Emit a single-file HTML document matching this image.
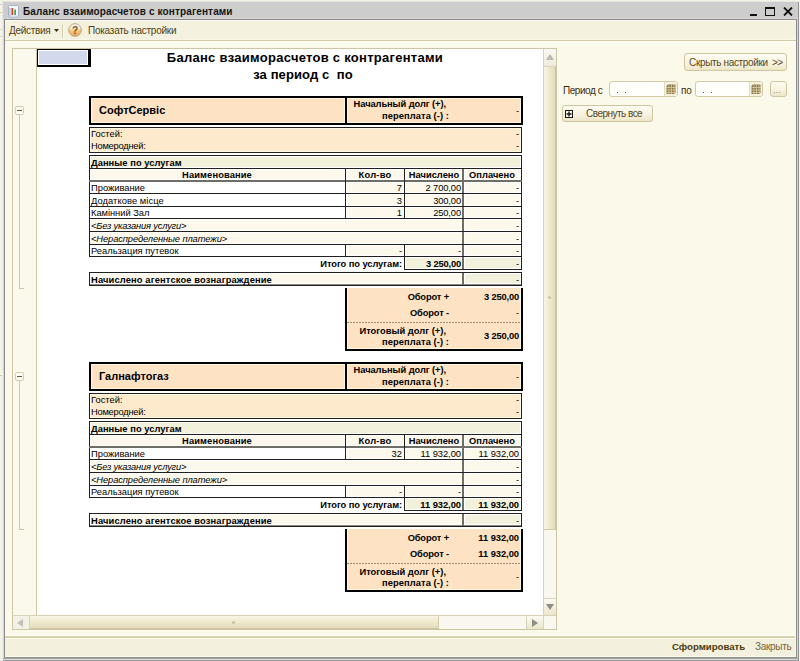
<!DOCTYPE html><html><head><meta charset="utf-8"><style>html,body{margin:0;padding:0;width:800px;height:661px;overflow:hidden}body{position:relative;font-family:"Liberation Sans",sans-serif}body>div,body>svg{position:absolute}</style></head><body><div style="left:0px;top:0px;width:800px;height:661px;background:#f6f3e2;"></div>
<div style="left:0px;top:4px;width:2px;height:1px;background:#d8ceb0;"></div>
<div style="left:0px;top:12px;width:2px;height:1px;background:#d8ceb0;"></div>
<div style="left:0px;top:29px;width:2px;height:1px;background:#e0d8c0;"></div>
<div style="left:0px;top:36px;width:2px;height:1px;background:#e0d8c0;"></div>
<div style="left:0px;top:375px;width:2px;height:1px;background:#d8ceb0;"></div>
<div style="left:2px;top:1px;width:797px;height:660px;background:#e6e6e6;"></div>
<div style="left:3px;top:2px;width:795px;height:659px;background:#cdcdcd;"></div>
<div style="left:5px;top:20px;width:791px;height:636px;background:#fbf9ea;"></div>
<div style="left:3px;top:18px;width:795px;height:1px;background:#d9d9d9;"></div>
<div style="left:4px;top:19px;width:793px;height:1px;background:#8a8a8a;"></div>
<div style="left:4px;top:19px;width:1px;height:639px;background:#8a8a8a;"></div>
<div style="left:796px;top:19px;width:1px;height:639px;background:#8a8a8a;"></div>
<div style="left:4px;top:657px;width:793px;height:1px;background:#8e8e8e;"></div>
<div style="left:3px;top:658px;width:795px;height:1px;background:#a6a6a6;"></div>
<div style="left:3px;top:659px;width:795px;height:1px;background:#d8d8d8;"></div>
<div style="left:2px;top:660px;width:797px;height:1px;background:#9c9c9c;"></div>
<div style="left:3px;top:20px;width:1px;height:638px;background:#d8d8dc;"></div>
<div style="left:2px;top:20px;width:1px;height:641px;background:#ececec;"></div>
<div style="left:797px;top:20px;width:1px;height:638px;background:#d4d4d4;"></div>
<div style="left:798px;top:2px;width:1px;height:659px;background:#929292;"></div>
<div style="left:5px;top:20px;width:791px;height:20px;background:#f4f2de;"></div>
<div style="left:5px;top:20px;width:791px;height:1px;background:#fdfcf2;"></div>
<div style="left:5px;top:39px;width:791px;height:1px;background:#f8f6e6;"></div>
<div style="left:5px;top:40px;width:791px;height:1px;background:#d3cba8;"></div>
<div style="left:5px;top:41px;width:791px;height:1px;background:#fdfcf0;"></div>
<svg style="left:8px;top:5px" width="12" height="13" viewBox="0 0 12 13"><rect x="0.5" y="0.5" width="10" height="11.5" rx="1" fill="#f6f8fc" stroke="#9fb2c8"/><path d="M2 3v8" stroke="#b0b0b0"/><rect x="3.5" y="3" width="1.6" height="7" fill="#e03020"/><rect x="6.3" y="4.5" width="1.6" height="5.5" fill="#30a040"/><rect x="1" y="10.5" width="9" height="1.2" fill="#c8daf0"/></svg>
<div style="top:6px;font-size:10px;font-weight:bold;color:#141414;line-height:normal;white-space:pre;letter-spacing:0.13px;left:23px;">Баланс взаиморасчетов с контрагентами</div>
<div style="left:750px;top:14px;width:7px;height:2px;background:#111;"></div>
<div style="left:765px;top:7px;width:10px;height:9px;box-sizing:border-box;border:1px solid #111;"></div>
<div style="left:765px;top:7px;width:10px;height:2px;background:#111;"></div>
<svg style="left:783px;top:7px" width="10" height="9" viewBox="0 0 10 9"><path d="M1 0.5L9 8.5M9 0.5L1 8.5" stroke="#111" stroke-width="1.8"/></svg>
<div style="top:25px;font-size:10px;font-weight:normal;color:#4e3e14;line-height:normal;white-space:pre;letter-spacing:-0.3px;left:9px;">Действия</div>
<svg style="left:54px;top:29px" width="5" height="3" viewBox="0 0 5 3"><path d="M0 0h5L2.5 3z" fill="#3b2e0c"/></svg>
<div style="left:62px;top:24px;width:1px;height:14px;background:#d2cbac;"></div>
<div style="left:63px;top:24px;width:1px;height:14px;background:#fbfaf2;"></div>
<svg style="left:68px;top:23px" width="14" height="14" viewBox="0 0 14 14"><defs><linearGradient id="hg" x1="0" y1="0" x2="0" y2="1"><stop offset="0" stop-color="#fffaf0"/><stop offset="0.4" stop-color="#fde6c0"/><stop offset="0.55" stop-color="#f9c47a"/><stop offset="1" stop-color="#f0a850"/></linearGradient></defs><circle cx="7" cy="7" r="6.3" fill="url(#hg)" stroke="#a49c88" stroke-width="0.9"/><text x="7" y="10.8" font-family="Liberation Sans" font-weight="bold" font-size="10" text-anchor="middle" fill="#6a5a30">?</text></svg>
<div style="top:25px;font-size:10px;font-weight:normal;color:#4e3e14;line-height:normal;white-space:pre;letter-spacing:-0.24px;left:88px;">Показать настройки</div>
<div style="left:5px;top:635px;width:791px;height:1px;background:#fffff6;"></div>
<div style="left:5px;top:636px;width:791px;height:1px;background:#d6cfae;"></div>
<div style="left:5px;top:637px;width:791px;height:1px;background:#d8d1b2;"></div>
<div style="left:5px;top:638px;width:791px;height:19px;background:#f3f1dd;"></div>
<div style="left:5px;top:638px;width:791px;height:1px;background:#fdfbe8;"></div>
<div style="left:5px;top:656px;width:791px;height:1px;background:#fdfce8;"></div>
<div style="left:795px;top:42px;width:1px;height:615px;background:#fdfce8;"></div>
<div style="top:641px;font-size:9.7px;font-weight:bold;color:#4e3c12;line-height:normal;white-space:pre;letter-spacing:-0.05px;left:672px;">Сформировать</div>
<div style="top:641px;font-size:10px;font-weight:normal;color:#76653a;line-height:normal;white-space:pre;letter-spacing:-0.3px;left:755px;">Закрыть</div>
<div style="left:12px;top:48px;width:545px;height:582px;background:#ffffff;box-sizing:border-box;border:1px solid #cdc6a4;"></div>
<div style="left:13px;top:49px;width:23px;height:566px;background:#fbf9ec;"></div>
<div style="left:36px;top:49px;width:1px;height:566px;background:#cdc6a4;"></div>
<div style="left:543px;top:49px;width:13px;height:566px;background:#f9f7ef;"></div>
<div style="left:543px;top:49px;width:1px;height:566px;background:#d8d2b8;"></div>
<div style="left:544px;top:49px;width:12px;height:17px;background:linear-gradient(180deg,#fbfaf2,#efeadb)"></div>
<div style="left:544px;top:66px;width:12px;height:1px;background:#d9d3ba;"></div>
<svg style="left:546px;top:54px" width="8" height="6" viewBox="0 0 8 6"><path d="M0 6h8L4 0z" fill="#b8b8b0"/></svg>
<div style="left:544px;top:67px;width:12px;height:463px;background:linear-gradient(90deg,#f9f6e4,#efe9cc 50%,#e4dcbc);box-sizing:border-box;border-right:1px solid #cdc5a2;border-bottom:1px solid #d2caa8"></div>
<div style="left:548px;top:296px;width:3px;height:3px;background:#c8c2a8;border-radius:2px"></div>
<div style="left:544px;top:599px;width:12px;height:16px;background:linear-gradient(180deg,#fbfaf2,#ebe5ca)"></div>
<div style="left:544px;top:598px;width:12px;height:1px;background:#d9d3ba;"></div>
<svg style="left:546px;top:604px" width="8" height="6" viewBox="0 0 8 6"><path d="M0 0h8L4 6z" fill="#8c8c88"/></svg>
<div style="left:13px;top:615px;width:543px;height:14px;background:#f9f7ef;"></div>
<div style="left:13px;top:615px;width:543px;height:1px;background:#d8d2b8;"></div>
<div style="left:13px;top:616px;width:16px;height:13px;background:#f3f1e6;"></div>
<div style="left:29px;top:616px;width:1px;height:13px;background:#d9d3ba;"></div>
<svg style="left:17px;top:619px" width="6" height="8" viewBox="0 0 6 8"><path d="M6 0v8L0 4z" fill="#c0c0b8"/></svg>
<div style="left:30px;top:616px;width:409px;height:13px;background:linear-gradient(180deg,#f9f6e4,#efe9cc 50%,#e4dcbc);box-sizing:border-box;border-bottom:1px solid #cdc5a2;border-right:1px solid #d2caa8"></div>
<div style="left:232px;top:621px;width:3px;height:3px;background:#c8c2a8;border-radius:2px"></div>
<div style="left:527px;top:616px;width:16px;height:13px;background:linear-gradient(180deg,#fbfaf2,#ebe5ca)"></div>
<div style="left:526px;top:616px;width:1px;height:13px;background:#d9d3ba;"></div>
<svg style="left:532px;top:619px" width="6" height="8" viewBox="0 0 6 8"><path d="M0 0v8L6 4z" fill="#8c8c88"/></svg>
<div style="left:543px;top:615px;width:1px;height:14px;background:#d9d3ba;"></div>
<div style="left:15px;top:106px;width:9px;height:9px;background:#fdfcf4;box-sizing:border-box;border:1px solid #d4cdb0;border-radius:2px"></div>
<div style="left:17px;top:110px;width:5px;height:1px;background:#6a5a2a;"></div>
<div style="left:19px;top:115px;width:1px;height:173px;background:#cfc8a8;"></div>
<div style="left:19px;top:288px;width:5px;height:1px;background:#cfc8a8;"></div>
<div style="left:15px;top:372px;width:9px;height:9px;background:#fdfcf4;box-sizing:border-box;border:1px solid #d4cdb0;border-radius:2px"></div>
<div style="left:17px;top:376px;width:5px;height:1px;background:#6a5a2a;"></div>
<div style="left:19px;top:381px;width:1px;height:148px;background:#cfc8a8;"></div>
<div style="left:19px;top:529px;width:5px;height:1px;background:#cfc8a8;"></div>
<div style="left:37px;top:49px;width:54px;height:18px;background:#000;"></div>
<div style="left:38px;top:50px;width:50px;height:15px;background:#fff;"></div>
<div style="left:39px;top:51px;width:48px;height:13px;background:#d3d9ed;"></div>
<div style="top:50px;font-size:13px;font-weight:bold;color:#000;line-height:normal;white-space:pre;letter-spacing:0.27px;left:5px;width:600px;text-align:center;">Баланс взаиморасчетов с контрагентами</div>
<div style="top:67px;font-size:13px;font-weight:bold;color:#000;line-height:normal;white-space:pre;letter-spacing:0.1px;left:3px;width:600px;text-align:center;">за период с  по</div>
<div style="left:89px;top:96px;width:434px;height:29px;background:#000;"></div>
<div style="left:91px;top:98px;width:254px;height:25px;background:#fff8dc;"></div>
<div style="left:92px;top:99px;width:252px;height:23px;background:#fde3c4;"></div>
<div style="left:347px;top:98px;width:174px;height:25px;background:#fff8dc;"></div>
<div style="left:348px;top:99px;width:172px;height:23px;background:#fde3c4;"></div>
<div style="top:104px;font-size:11px;font-weight:bold;color:#000;line-height:normal;white-space:pre;left:99px;">СофтСервіс</div>
<div style="top:99px;font-size:9.33px;font-weight:bold;color:#000;line-height:normal;white-space:pre;letter-spacing:-0.08px;left:46px;width:400px;text-align:right;">Начальный долг (+),</div>
<div style="top:111px;font-size:9.33px;font-weight:bold;color:#000;line-height:normal;white-space:pre;letter-spacing:0.08px;left:49px;width:400px;text-align:right;">переплата (-) :</div>
<div style="top:106px;font-size:9.33px;font-weight:normal;color:#000;line-height:normal;white-space:pre;left:119px;width:400px;text-align:right;">-</div>
<div style="left:89px;top:127px;width:433px;height:26px;background:#202020;"></div>
<div style="left:90px;top:128px;width:431px;height:24px;background:#fffbe2;"></div>
<div style="left:91px;top:129px;width:429px;height:22px;background:#fdeacc;"></div>
<div style="top:129px;font-size:9.33px;font-weight:normal;color:#000;line-height:normal;white-space:pre;letter-spacing:0.02px;left:91px;">Гостей:</div>
<div style="top:141px;font-size:9.33px;font-weight:normal;color:#000;line-height:normal;white-space:pre;letter-spacing:-0.24px;left:91px;">Номеродней:</div>
<div style="top:129px;font-size:9.33px;font-weight:normal;color:#000;line-height:normal;white-space:pre;left:119px;width:400px;text-align:right;">-</div>
<div style="top:141px;font-size:9.33px;font-weight:normal;color:#000;line-height:normal;white-space:pre;left:119px;width:400px;text-align:right;">-</div>
<div style="left:89px;top:155px;width:433px;height:27px;background:#202020;"></div>
<div style="left:90px;top:156px;width:431px;height:12px;background:#ffffff;"></div>
<div style="left:91px;top:157px;width:429px;height:10px;background:#f2f1dc;"></div>
<div style="top:158px;font-size:9.33px;font-weight:bold;color:#000;line-height:normal;white-space:pre;letter-spacing:0.05px;left:91px;">Данные по услугам</div>
<div style="left:90px;top:169px;width:255px;height:11px;background:#ffffff;"></div>
<div style="left:91px;top:170px;width:253px;height:9px;background:#fdf8ec;"></div>
<div style="left:346px;top:169px;width:58px;height:11px;background:#ffffff;"></div>
<div style="left:347px;top:170px;width:56px;height:9px;background:#fdf8ec;"></div>
<div style="left:405px;top:169px;width:57px;height:11px;background:#ffffff;"></div>
<div style="left:406px;top:170px;width:55px;height:9px;background:#fdf8ec;"></div>
<div style="left:464px;top:169px;width:57px;height:11px;background:#ffffff;"></div>
<div style="left:465px;top:170px;width:55px;height:9px;background:#fdf8ec;"></div>
<div style="left:462px;top:169px;width:2px;height:11px;background:#6e6e66;"></div>
<div style="left:89px;top:180px;width:433px;height:2px;background:#6e6e66;"></div>
<div style="left:345px;top:180px;width:1px;height:2px;background:#202020;"></div>
<div style="left:404px;top:180px;width:1px;height:2px;background:#202020;"></div>
<div style="top:170px;font-size:9.33px;font-weight:bold;color:#000;line-height:normal;white-space:pre;letter-spacing:0.11px;left:-83px;width:600px;text-align:center;">Наименование</div>
<div style="top:170px;font-size:9.33px;font-weight:bold;color:#000;line-height:normal;white-space:pre;letter-spacing:0.25px;left:75px;width:600px;text-align:center;">Кол-во</div>
<div style="top:170px;font-size:9.33px;font-weight:bold;color:#000;line-height:normal;white-space:pre;left:134px;width:600px;text-align:center;">Начислено</div>
<div style="top:170px;font-size:9.33px;font-weight:bold;color:#000;line-height:normal;white-space:pre;letter-spacing:0.02px;left:192px;width:600px;text-align:center;">Оплачено</div>
<div style="left:89px;top:182px;width:433px;height:12px;background:#202020;"></div>
<div style="left:90px;top:182px;width:255px;height:11px;background:#ffffff;"></div>
<div style="left:91px;top:183px;width:253px;height:9px;background:#ffffff;"></div>
<div style="left:346px;top:182px;width:58px;height:11px;background:#ffffff;"></div>
<div style="left:347px;top:183px;width:56px;height:9px;background:#fdf8ec;"></div>
<div style="left:405px;top:182px;width:57px;height:11px;background:#ffffff;"></div>
<div style="left:406px;top:183px;width:55px;height:9px;background:#fdf8ec;"></div>
<div style="left:464px;top:182px;width:57px;height:11px;background:#ffffff;"></div>
<div style="left:465px;top:183px;width:55px;height:9px;background:#fdf8ec;"></div>
<div style="left:462px;top:182px;width:2px;height:11px;background:#6e6e66;"></div>
<div style="top:183px;font-size:9.33px;font-weight:normal;color:#000;line-height:normal;white-space:pre;left:91px;">Проживание</div>
<div style="top:183px;font-size:9.33px;font-weight:normal;color:#000;line-height:normal;white-space:pre;left:2px;width:400px;text-align:right;">7</div>
<div style="top:183px;font-size:9.33px;font-weight:normal;color:#000;line-height:normal;white-space:pre;letter-spacing:-0.11px;left:61px;width:400px;text-align:right;">2 700,00</div>
<div style="top:183px;font-size:9.33px;font-weight:normal;color:#000;line-height:normal;white-space:pre;left:119px;width:400px;text-align:right;">-</div>
<div style="left:89px;top:194px;width:433px;height:13px;background:#202020;"></div>
<div style="left:90px;top:194px;width:255px;height:12px;background:#ffffff;"></div>
<div style="left:91px;top:195px;width:253px;height:10px;background:#ffffff;"></div>
<div style="left:346px;top:194px;width:58px;height:12px;background:#ffffff;"></div>
<div style="left:347px;top:195px;width:56px;height:10px;background:#fdf8ec;"></div>
<div style="left:405px;top:194px;width:57px;height:12px;background:#ffffff;"></div>
<div style="left:406px;top:195px;width:55px;height:10px;background:#fdf8ec;"></div>
<div style="left:464px;top:194px;width:57px;height:12px;background:#ffffff;"></div>
<div style="left:465px;top:195px;width:55px;height:10px;background:#fdf8ec;"></div>
<div style="left:462px;top:194px;width:2px;height:12px;background:#6e6e66;"></div>
<div style="top:196px;font-size:9.33px;font-weight:normal;color:#000;line-height:normal;white-space:pre;letter-spacing:0.07px;left:91px;">Додаткове місце</div>
<div style="top:196px;font-size:9.33px;font-weight:normal;color:#000;line-height:normal;white-space:pre;left:2px;width:400px;text-align:right;">3</div>
<div style="top:196px;font-size:9.33px;font-weight:normal;color:#000;line-height:normal;white-space:pre;letter-spacing:-0.11px;left:61px;width:400px;text-align:right;">300,00</div>
<div style="top:196px;font-size:9.33px;font-weight:normal;color:#000;line-height:normal;white-space:pre;left:119px;width:400px;text-align:right;">-</div>
<div style="left:89px;top:207px;width:433px;height:12px;background:#202020;"></div>
<div style="left:90px;top:207px;width:255px;height:11px;background:#ffffff;"></div>
<div style="left:91px;top:208px;width:253px;height:9px;background:#ffffff;"></div>
<div style="left:346px;top:207px;width:58px;height:11px;background:#ffffff;"></div>
<div style="left:347px;top:208px;width:56px;height:9px;background:#fdf8ec;"></div>
<div style="left:405px;top:207px;width:57px;height:11px;background:#ffffff;"></div>
<div style="left:406px;top:208px;width:55px;height:9px;background:#fdf8ec;"></div>
<div style="left:464px;top:207px;width:57px;height:11px;background:#ffffff;"></div>
<div style="left:465px;top:208px;width:55px;height:9px;background:#fdf8ec;"></div>
<div style="left:462px;top:207px;width:2px;height:11px;background:#6e6e66;"></div>
<div style="top:208px;font-size:9.33px;font-weight:normal;color:#000;line-height:normal;white-space:pre;letter-spacing:-0.03px;left:91px;">Камінний Зал</div>
<div style="top:208px;font-size:9.33px;font-weight:normal;color:#000;line-height:normal;white-space:pre;left:2px;width:400px;text-align:right;">1</div>
<div style="top:208px;font-size:9.33px;font-weight:normal;color:#000;line-height:normal;white-space:pre;letter-spacing:-0.11px;left:61px;width:400px;text-align:right;">250,00</div>
<div style="top:208px;font-size:9.33px;font-weight:normal;color:#000;line-height:normal;white-space:pre;left:119px;width:400px;text-align:right;">-</div>
<div style="left:89px;top:219px;width:433px;height:13px;background:#202020;"></div>
<div style="left:90px;top:219px;width:372px;height:12px;background:#ffffff;"></div>
<div style="left:91px;top:220px;width:370px;height:10px;background:#fdf8ec;"></div>
<div style="left:464px;top:219px;width:57px;height:12px;background:#ffffff;"></div>
<div style="left:465px;top:220px;width:55px;height:10px;background:#fdf8ec;"></div>
<div style="left:462px;top:219px;width:2px;height:12px;background:#6e6e66;"></div>
<div style="top:221px;font-size:9.33px;font-weight:normal;color:#000;line-height:normal;white-space:pre;font-style:italic;letter-spacing:-0.19px;left:91px;">&lt;Без указания услуги&gt;</div>
<div style="top:221px;font-size:9.33px;font-weight:normal;color:#000;line-height:normal;white-space:pre;left:119px;width:400px;text-align:right;">-</div>
<div style="left:89px;top:232px;width:433px;height:13px;background:#202020;"></div>
<div style="left:90px;top:232px;width:372px;height:12px;background:#ffffff;"></div>
<div style="left:91px;top:233px;width:370px;height:10px;background:#fdf8ec;"></div>
<div style="left:464px;top:232px;width:57px;height:12px;background:#ffffff;"></div>
<div style="left:465px;top:233px;width:55px;height:10px;background:#fdf8ec;"></div>
<div style="left:462px;top:232px;width:2px;height:12px;background:#6e6e66;"></div>
<div style="top:234px;font-size:9.33px;font-weight:normal;color:#000;line-height:normal;white-space:pre;font-style:italic;letter-spacing:-0.1px;left:91px;">&lt;Нераспределенные платежи&gt;</div>
<div style="top:234px;font-size:9.33px;font-weight:normal;color:#000;line-height:normal;white-space:pre;left:119px;width:400px;text-align:right;">-</div>
<div style="left:89px;top:245px;width:433px;height:12px;background:#202020;"></div>
<div style="left:90px;top:245px;width:255px;height:11px;background:#ffffff;"></div>
<div style="left:91px;top:246px;width:253px;height:9px;background:#ffffff;"></div>
<div style="left:346px;top:245px;width:58px;height:11px;background:#ffffff;"></div>
<div style="left:347px;top:246px;width:56px;height:9px;background:#fdf8ec;"></div>
<div style="left:405px;top:245px;width:57px;height:11px;background:#ffffff;"></div>
<div style="left:406px;top:246px;width:55px;height:9px;background:#fdf8ec;"></div>
<div style="left:464px;top:245px;width:57px;height:11px;background:#ffffff;"></div>
<div style="left:465px;top:246px;width:55px;height:9px;background:#fdf8ec;"></div>
<div style="left:462px;top:245px;width:2px;height:11px;background:#6e6e66;"></div>
<div style="top:246px;font-size:9.33px;font-weight:normal;color:#000;line-height:normal;white-space:pre;letter-spacing:0.01px;left:91px;">Реальзация путевок</div>
<div style="top:246px;font-size:9.33px;font-weight:normal;color:#000;line-height:normal;white-space:pre;left:2px;width:400px;text-align:right;">-</div>
<div style="top:246px;font-size:9.33px;font-weight:normal;color:#000;line-height:normal;white-space:pre;left:61px;width:400px;text-align:right;">-</div>
<div style="top:246px;font-size:9.33px;font-weight:normal;color:#000;line-height:normal;white-space:pre;left:119px;width:400px;text-align:right;">-</div>
<div style="left:404px;top:256px;width:118px;height:14px;background:#202020;"></div>
<div style="left:405px;top:257px;width:57px;height:12px;background:#ffffff;"></div>
<div style="left:406px;top:258px;width:55px;height:10px;background:#f2f1dc;"></div>
<div style="left:464px;top:257px;width:57px;height:12px;background:#ffffff;"></div>
<div style="left:465px;top:258px;width:55px;height:10px;background:#f2f1dc;"></div>
<div style="left:462px;top:257px;width:2px;height:12px;background:#6e6e66;"></div>
<div style="top:259px;font-size:9.33px;font-weight:bold;color:#000;line-height:normal;white-space:pre;letter-spacing:-0.08px;left:2px;width:400px;text-align:right;">Итого по услугам:</div>
<div style="top:259px;font-size:9.33px;font-weight:bold;color:#000;line-height:normal;white-space:pre;letter-spacing:-0.16px;left:61px;width:400px;text-align:right;">3 250,00</div>
<div style="top:259px;font-size:9.33px;font-weight:normal;color:#000;line-height:normal;white-space:pre;left:119px;width:400px;text-align:right;">-</div>
<div style="left:89px;top:272px;width:433px;height:14px;background:#202020;"></div>
<div style="left:90px;top:273px;width:372px;height:11px;background:#ffffff;"></div>
<div style="left:91px;top:274px;width:370px;height:9px;background:#fdf8ec;"></div>
<div style="left:464px;top:273px;width:57px;height:11px;background:#ffffff;"></div>
<div style="left:465px;top:274px;width:55px;height:9px;background:#f2f1dc;"></div>
<div style="left:90px;top:284px;width:431px;height:1px;background:#8c8a80;"></div>
<div style="left:462px;top:273px;width:2px;height:12px;background:#6e6e66;"></div>
<div style="top:275px;font-size:9.33px;font-weight:bold;color:#000;line-height:normal;white-space:pre;letter-spacing:0.14px;left:91px;">Начислено агентское вознаграждение</div>
<div style="top:275px;font-size:9.33px;font-weight:normal;color:#000;line-height:normal;white-space:pre;left:119px;width:400px;text-align:right;">-</div>
<div style="left:345px;top:288px;width:178px;height:63px;background:#000;"></div>
<div style="left:347px;top:288px;width:174px;height:61px;background:#fff8dc;"></div>
<div style="left:348px;top:289px;width:172px;height:59px;background:#fde3c4;"></div>
<div style="left:348px;top:288px;width:172px;height:1px;background:#fde3c4;"></div>
<div style="left:347px;top:322px;width:174px;height:1px;background:repeating-linear-gradient(90deg,#9c8c74 0 2px,transparent 2px 3px)"></div>
<div style="top:292px;font-size:9.33px;font-weight:bold;color:#000;line-height:normal;white-space:pre;letter-spacing:-0.14px;left:49px;width:400px;text-align:right;">Оборот +</div>
<div style="top:292px;font-size:9.33px;font-weight:bold;color:#000;line-height:normal;white-space:pre;letter-spacing:-0.16px;left:119px;width:400px;text-align:right;">3 250,00</div>
<div style="top:308px;font-size:9.33px;font-weight:bold;color:#000;line-height:normal;white-space:pre;letter-spacing:-0.14px;left:49px;width:400px;text-align:right;">Оборот -</div>
<div style="top:308px;font-size:9.33px;font-weight:normal;color:#000;line-height:normal;white-space:pre;left:119px;width:400px;text-align:right;">-</div>
<div style="top:326px;font-size:9.33px;font-weight:bold;color:#000;line-height:normal;white-space:pre;letter-spacing:0.01px;left:46px;width:400px;text-align:right;">Итоговый долг (+),</div>
<div style="top:337px;font-size:9.33px;font-weight:bold;color:#000;line-height:normal;white-space:pre;letter-spacing:0.08px;left:49px;width:400px;text-align:right;">переплата (-) :</div>
<div style="top:331px;font-size:9.33px;font-weight:bold;color:#000;line-height:normal;white-space:pre;letter-spacing:-0.16px;left:119px;width:400px;text-align:right;">3 250,00</div>
<div style="left:89px;top:362px;width:434px;height:29px;background:#000;"></div>
<div style="left:91px;top:364px;width:254px;height:25px;background:#fff8dc;"></div>
<div style="left:92px;top:365px;width:252px;height:23px;background:#fde3c4;"></div>
<div style="left:347px;top:364px;width:174px;height:25px;background:#fff8dc;"></div>
<div style="left:348px;top:365px;width:172px;height:23px;background:#fde3c4;"></div>
<div style="top:370px;font-size:11px;font-weight:bold;color:#000;line-height:normal;white-space:pre;left:99px;">Галнафтогаз</div>
<div style="top:365px;font-size:9.33px;font-weight:bold;color:#000;line-height:normal;white-space:pre;letter-spacing:-0.08px;left:46px;width:400px;text-align:right;">Начальный долг (+),</div>
<div style="top:377px;font-size:9.33px;font-weight:bold;color:#000;line-height:normal;white-space:pre;letter-spacing:0.08px;left:49px;width:400px;text-align:right;">переплата (-) :</div>
<div style="top:372px;font-size:9.33px;font-weight:normal;color:#000;line-height:normal;white-space:pre;left:119px;width:400px;text-align:right;">-</div>
<div style="left:89px;top:393px;width:433px;height:26px;background:#202020;"></div>
<div style="left:90px;top:394px;width:431px;height:24px;background:#fffbe2;"></div>
<div style="left:91px;top:395px;width:429px;height:22px;background:#fdeacc;"></div>
<div style="top:395px;font-size:9.33px;font-weight:normal;color:#000;line-height:normal;white-space:pre;letter-spacing:0.02px;left:91px;">Гостей:</div>
<div style="top:407px;font-size:9.33px;font-weight:normal;color:#000;line-height:normal;white-space:pre;letter-spacing:-0.24px;left:91px;">Номеродней:</div>
<div style="top:395px;font-size:9.33px;font-weight:normal;color:#000;line-height:normal;white-space:pre;left:119px;width:400px;text-align:right;">-</div>
<div style="top:407px;font-size:9.33px;font-weight:normal;color:#000;line-height:normal;white-space:pre;left:119px;width:400px;text-align:right;">-</div>
<div style="left:89px;top:421px;width:433px;height:27px;background:#202020;"></div>
<div style="left:90px;top:422px;width:431px;height:12px;background:#ffffff;"></div>
<div style="left:91px;top:423px;width:429px;height:10px;background:#f2f1dc;"></div>
<div style="top:424px;font-size:9.33px;font-weight:bold;color:#000;line-height:normal;white-space:pre;letter-spacing:0.05px;left:91px;">Данные по услугам</div>
<div style="left:90px;top:435px;width:255px;height:11px;background:#ffffff;"></div>
<div style="left:91px;top:436px;width:253px;height:9px;background:#fdf8ec;"></div>
<div style="left:346px;top:435px;width:58px;height:11px;background:#ffffff;"></div>
<div style="left:347px;top:436px;width:56px;height:9px;background:#fdf8ec;"></div>
<div style="left:405px;top:435px;width:57px;height:11px;background:#ffffff;"></div>
<div style="left:406px;top:436px;width:55px;height:9px;background:#fdf8ec;"></div>
<div style="left:464px;top:435px;width:57px;height:11px;background:#ffffff;"></div>
<div style="left:465px;top:436px;width:55px;height:9px;background:#fdf8ec;"></div>
<div style="left:462px;top:435px;width:2px;height:11px;background:#6e6e66;"></div>
<div style="left:89px;top:446px;width:433px;height:2px;background:#6e6e66;"></div>
<div style="left:345px;top:446px;width:1px;height:2px;background:#202020;"></div>
<div style="left:404px;top:446px;width:1px;height:2px;background:#202020;"></div>
<div style="top:436px;font-size:9.33px;font-weight:bold;color:#000;line-height:normal;white-space:pre;letter-spacing:0.11px;left:-83px;width:600px;text-align:center;">Наименование</div>
<div style="top:436px;font-size:9.33px;font-weight:bold;color:#000;line-height:normal;white-space:pre;letter-spacing:0.25px;left:75px;width:600px;text-align:center;">Кол-во</div>
<div style="top:436px;font-size:9.33px;font-weight:bold;color:#000;line-height:normal;white-space:pre;left:134px;width:600px;text-align:center;">Начислено</div>
<div style="top:436px;font-size:9.33px;font-weight:bold;color:#000;line-height:normal;white-space:pre;letter-spacing:0.02px;left:192px;width:600px;text-align:center;">Оплачено</div>
<div style="left:89px;top:448px;width:433px;height:12px;background:#202020;"></div>
<div style="left:90px;top:448px;width:255px;height:11px;background:#ffffff;"></div>
<div style="left:91px;top:449px;width:253px;height:9px;background:#ffffff;"></div>
<div style="left:346px;top:448px;width:58px;height:11px;background:#ffffff;"></div>
<div style="left:347px;top:449px;width:56px;height:9px;background:#fdf8ec;"></div>
<div style="left:405px;top:448px;width:57px;height:11px;background:#ffffff;"></div>
<div style="left:406px;top:449px;width:55px;height:9px;background:#fdf8ec;"></div>
<div style="left:464px;top:448px;width:57px;height:11px;background:#ffffff;"></div>
<div style="left:465px;top:449px;width:55px;height:9px;background:#fdf8ec;"></div>
<div style="left:462px;top:448px;width:2px;height:11px;background:#6e6e66;"></div>
<div style="top:449px;font-size:9.33px;font-weight:normal;color:#000;line-height:normal;white-space:pre;left:91px;">Проживание</div>
<div style="top:449px;font-size:9.33px;font-weight:normal;color:#000;line-height:normal;white-space:pre;left:2px;width:400px;text-align:right;">32</div>
<div style="top:449px;font-size:9.33px;font-weight:normal;color:#000;line-height:normal;white-space:pre;letter-spacing:-0.03px;left:61px;width:400px;text-align:right;">11 932,00</div>
<div style="top:449px;font-size:9.33px;font-weight:normal;color:#000;line-height:normal;white-space:pre;letter-spacing:-0.03px;left:119px;width:400px;text-align:right;">11 932,00</div>
<div style="left:89px;top:460px;width:433px;height:13px;background:#202020;"></div>
<div style="left:90px;top:460px;width:372px;height:12px;background:#ffffff;"></div>
<div style="left:91px;top:461px;width:370px;height:10px;background:#fdf8ec;"></div>
<div style="left:464px;top:460px;width:57px;height:12px;background:#ffffff;"></div>
<div style="left:465px;top:461px;width:55px;height:10px;background:#fdf8ec;"></div>
<div style="left:462px;top:460px;width:2px;height:12px;background:#6e6e66;"></div>
<div style="top:462px;font-size:9.33px;font-weight:normal;color:#000;line-height:normal;white-space:pre;font-style:italic;letter-spacing:-0.19px;left:91px;">&lt;Без указания услуги&gt;</div>
<div style="top:462px;font-size:9.33px;font-weight:normal;color:#000;line-height:normal;white-space:pre;left:119px;width:400px;text-align:right;">-</div>
<div style="left:89px;top:473px;width:433px;height:13px;background:#202020;"></div>
<div style="left:90px;top:473px;width:372px;height:12px;background:#ffffff;"></div>
<div style="left:91px;top:474px;width:370px;height:10px;background:#fdf8ec;"></div>
<div style="left:464px;top:473px;width:57px;height:12px;background:#ffffff;"></div>
<div style="left:465px;top:474px;width:55px;height:10px;background:#fdf8ec;"></div>
<div style="left:462px;top:473px;width:2px;height:12px;background:#6e6e66;"></div>
<div style="top:475px;font-size:9.33px;font-weight:normal;color:#000;line-height:normal;white-space:pre;font-style:italic;letter-spacing:-0.1px;left:91px;">&lt;Нераспределенные платежи&gt;</div>
<div style="top:475px;font-size:9.33px;font-weight:normal;color:#000;line-height:normal;white-space:pre;left:119px;width:400px;text-align:right;">-</div>
<div style="left:89px;top:486px;width:433px;height:12px;background:#202020;"></div>
<div style="left:90px;top:486px;width:255px;height:11px;background:#ffffff;"></div>
<div style="left:91px;top:487px;width:253px;height:9px;background:#ffffff;"></div>
<div style="left:346px;top:486px;width:58px;height:11px;background:#ffffff;"></div>
<div style="left:347px;top:487px;width:56px;height:9px;background:#fdf8ec;"></div>
<div style="left:405px;top:486px;width:57px;height:11px;background:#ffffff;"></div>
<div style="left:406px;top:487px;width:55px;height:9px;background:#fdf8ec;"></div>
<div style="left:464px;top:486px;width:57px;height:11px;background:#ffffff;"></div>
<div style="left:465px;top:487px;width:55px;height:9px;background:#fdf8ec;"></div>
<div style="left:462px;top:486px;width:2px;height:11px;background:#6e6e66;"></div>
<div style="top:487px;font-size:9.33px;font-weight:normal;color:#000;line-height:normal;white-space:pre;letter-spacing:0.01px;left:91px;">Реальзация путевок</div>
<div style="top:487px;font-size:9.33px;font-weight:normal;color:#000;line-height:normal;white-space:pre;left:2px;width:400px;text-align:right;">-</div>
<div style="top:487px;font-size:9.33px;font-weight:normal;color:#000;line-height:normal;white-space:pre;left:61px;width:400px;text-align:right;">-</div>
<div style="top:487px;font-size:9.33px;font-weight:normal;color:#000;line-height:normal;white-space:pre;left:119px;width:400px;text-align:right;">-</div>
<div style="left:404px;top:497px;width:118px;height:14px;background:#202020;"></div>
<div style="left:405px;top:498px;width:57px;height:12px;background:#ffffff;"></div>
<div style="left:406px;top:499px;width:55px;height:10px;background:#f2f1dc;"></div>
<div style="left:464px;top:498px;width:57px;height:12px;background:#ffffff;"></div>
<div style="left:465px;top:499px;width:55px;height:10px;background:#f2f1dc;"></div>
<div style="left:462px;top:498px;width:2px;height:12px;background:#6e6e66;"></div>
<div style="top:500px;font-size:9.33px;font-weight:bold;color:#000;line-height:normal;white-space:pre;letter-spacing:-0.08px;left:2px;width:400px;text-align:right;">Итого по услугам:</div>
<div style="top:500px;font-size:9.33px;font-weight:bold;color:#000;line-height:normal;white-space:pre;letter-spacing:-0.03px;left:61px;width:400px;text-align:right;">11 932,00</div>
<div style="top:500px;font-size:9.33px;font-weight:bold;color:#000;line-height:normal;white-space:pre;letter-spacing:-0.03px;left:119px;width:400px;text-align:right;">11 932,00</div>
<div style="left:89px;top:513px;width:433px;height:14px;background:#202020;"></div>
<div style="left:90px;top:514px;width:372px;height:11px;background:#ffffff;"></div>
<div style="left:91px;top:515px;width:370px;height:9px;background:#fdf8ec;"></div>
<div style="left:464px;top:514px;width:57px;height:11px;background:#ffffff;"></div>
<div style="left:465px;top:515px;width:55px;height:9px;background:#f2f1dc;"></div>
<div style="left:90px;top:525px;width:431px;height:1px;background:#8c8a80;"></div>
<div style="left:462px;top:514px;width:2px;height:12px;background:#6e6e66;"></div>
<div style="top:516px;font-size:9.33px;font-weight:bold;color:#000;line-height:normal;white-space:pre;letter-spacing:0.14px;left:91px;">Начислено агентское вознаграждение</div>
<div style="top:516px;font-size:9.33px;font-weight:normal;color:#000;line-height:normal;white-space:pre;left:119px;width:400px;text-align:right;">-</div>
<div style="left:345px;top:529px;width:178px;height:63px;background:#000;"></div>
<div style="left:347px;top:529px;width:174px;height:61px;background:#fff8dc;"></div>
<div style="left:348px;top:530px;width:172px;height:59px;background:#fde3c4;"></div>
<div style="left:348px;top:529px;width:172px;height:1px;background:#fde3c4;"></div>
<div style="left:347px;top:563px;width:174px;height:1px;background:repeating-linear-gradient(90deg,#9c8c74 0 2px,transparent 2px 3px)"></div>
<div style="top:533px;font-size:9.33px;font-weight:bold;color:#000;line-height:normal;white-space:pre;letter-spacing:-0.14px;left:49px;width:400px;text-align:right;">Оборот +</div>
<div style="top:533px;font-size:9.33px;font-weight:bold;color:#000;line-height:normal;white-space:pre;letter-spacing:-0.03px;left:119px;width:400px;text-align:right;">11 932,00</div>
<div style="top:549px;font-size:9.33px;font-weight:bold;color:#000;line-height:normal;white-space:pre;letter-spacing:-0.14px;left:49px;width:400px;text-align:right;">Оборот -</div>
<div style="top:549px;font-size:9.33px;font-weight:bold;color:#000;line-height:normal;white-space:pre;letter-spacing:-0.03px;left:119px;width:400px;text-align:right;">11 932,00</div>
<div style="top:567px;font-size:9.33px;font-weight:bold;color:#000;line-height:normal;white-space:pre;letter-spacing:0.01px;left:46px;width:400px;text-align:right;">Итоговый долг (+),</div>
<div style="top:578px;font-size:9.33px;font-weight:bold;color:#000;line-height:normal;white-space:pre;letter-spacing:0.08px;left:49px;width:400px;text-align:right;">переплата (-) :</div>
<div style="top:572px;font-size:9.33px;font-weight:normal;color:#000;line-height:normal;white-space:pre;left:119px;width:400px;text-align:right;">-</div>
<div style="left:684px;top:53px;width:103px;height:18px;box-sizing:border-box;border:1px solid #cfc6a0;border-radius:3px;background:linear-gradient(180deg,#fdfcf3 0%,#f6f2de 60%,#ece6c8 100%)"></div>
<div style="top:57px;font-size:10px;font-weight:normal;color:#56461c;line-height:normal;white-space:pre;letter-spacing:-0.34px;left:689px;">Скрыть настройки</div>
<div style="top:57px;font-size:10px;font-weight:normal;color:#5a4a20;line-height:normal;white-space:pre;letter-spacing:-0.6px;left:772px;">&gt;&gt;</div>
<div style="top:85px;font-size:10px;font-weight:normal;color:#3a2e10;line-height:normal;white-space:pre;letter-spacing:-0.46px;left:563px;">Период с</div>
<div style="top:85px;font-size:10px;font-weight:normal;color:#3a2e10;line-height:normal;white-space:pre;letter-spacing:-0.2px;left:681px;">по</div>
<div style="left:609px;top:81px;width:69px;height:16px;box-sizing:border-box;border:1px solid #d3cba8;border-radius:3px;background:#fffffc"></div>
<div style="left:664px;top:82px;width:13px;height:14px;background:#f5f1dd;border-radius:0 2px 2px 0"></div>
<div style="left:664px;top:82px;width:1px;height:14px;background:#e3dcc0;"></div>
<svg style="left:666px;top:84px" width="10" height="10" viewBox="0 0 10 10"><path d="M2 0.5h7.5v8l-1.5 1.5h-7.5v-8z" fill="#8a7644"/><path d="M3 1v9M5.5 0v10M8 0v9M0 3.5h10M0 6h10M0 8.5h9" stroke="#d9cfa6" stroke-width="0.8"/></svg>
<div style="left:617px;top:92px;width:1px;height:1px;background:#5a5a5a;"></div>
<div style="left:625px;top:92px;width:1px;height:1px;background:#5a5a5a;"></div>
<div style="left:695px;top:81px;width:68px;height:16px;box-sizing:border-box;border:1px solid #d3cba8;border-radius:3px;background:#fffffc"></div>
<div style="left:749px;top:82px;width:13px;height:14px;background:#f5f1dd;border-radius:0 2px 2px 0"></div>
<div style="left:749px;top:82px;width:1px;height:14px;background:#e3dcc0;"></div>
<svg style="left:751px;top:84px" width="10" height="10" viewBox="0 0 10 10"><path d="M2 0.5h7.5v8l-1.5 1.5h-7.5v-8z" fill="#8a7644"/><path d="M3 1v9M5.5 0v10M8 0v9M0 3.5h10M0 6h10M0 8.5h9" stroke="#d9cfa6" stroke-width="0.8"/></svg>
<div style="left:703px;top:92px;width:1px;height:1px;background:#5a5a5a;"></div>
<div style="left:711px;top:92px;width:1px;height:1px;background:#5a5a5a;"></div>
<div style="left:770px;top:81px;width:17px;height:16px;box-sizing:border-box;border:1px solid #cfc6a0;border-radius:3px;background:linear-gradient(180deg,#fdfcf3 0%,#f6f2de 60%,#ece6c8 100%)"></div>
<div style="top:85px;font-size:9.33px;font-weight:normal;color:#9a8f70;line-height:normal;white-space:pre;left:773px;">...</div>
<div style="left:562px;top:105px;width:91px;height:17px;box-sizing:border-box;border:1px solid #cfc6a0;border-radius:3px;background:linear-gradient(180deg,#fdfcf3 0%,#f6f2de 60%,#ece6c8 100%)"></div>
<svg style="left:565px;top:110px" width="8" height="8" viewBox="0 0 8 8"><rect x="0.5" y="0.5" width="7" height="7" fill="#f8f8f0" stroke="#1a1a1a"/><path d="M1.5 4h5M4 1.5v5" stroke="#1a1a1a" stroke-width="1.4"/></svg>
<div style="top:108px;font-size:10px;font-weight:normal;color:#56461c;line-height:normal;white-space:pre;letter-spacing:-0.52px;left:586px;">Свернуть все</div></body></html>
